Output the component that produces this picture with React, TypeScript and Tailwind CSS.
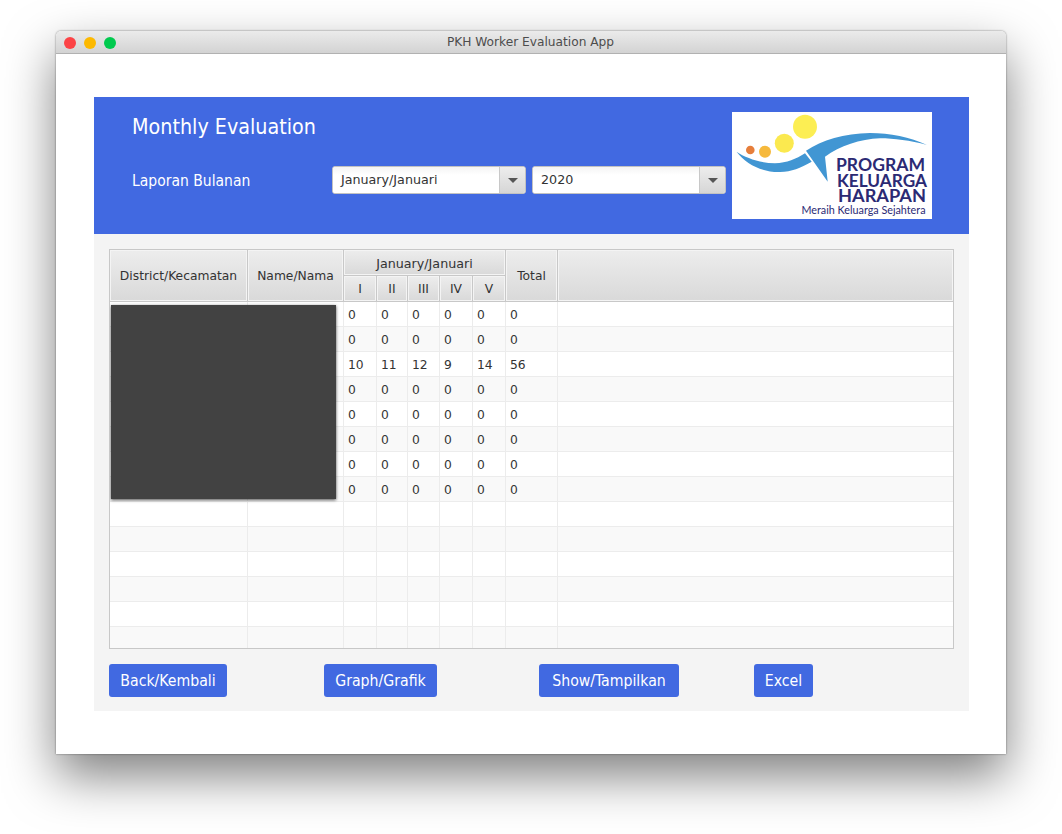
import { ReactNode } from 'react';

const font = "[font-family:'DejaVu_Sans',sans-serif]";

const rows = [
  [0, 0, 0, 0, 0, 0],
  [0, 0, 0, 0, 0, 0],
  [10, 11, 12, 9, 14, 56],
  [0, 0, 0, 0, 0, 0],
  [0, 0, 0, 0, 0, 0],
  [0, 0, 0, 0, 0, 0],
  [0, 0, 0, 0, 0, 0],
  [0, 0, 0, 0, 0, 0],
  [],
  [],
  [],
  [],
  [],
  [],
];

// column widths, each including its right hand line
const widths = ['w-[138px]', 'w-[96px]', 'w-[33px]', 'w-[31px]', 'w-[32px]', 'w-[33px]', 'w-[33px]', 'w-[52px]'];

const headCell =
  'flex items-center justify-center border-r border-b border-[#c8c8c8] bg-gradient-to-b from-[#ededed] to-[#d9d9d9] pt-[2px] text-[#333] shadow-[inset_0_0_0_1px_#f4f4f4]';

function Select({ value }: { value: string }) {
  return (
    <div className="flex h-[28px] w-[194px] overflow-hidden rounded-[3px] border border-[#c2c2c2] bg-white">
      <div className="flex flex-1 items-center bg-gradient-to-b from-[#f4f4f4] to-white to-30% pl-[8px] text-[12.7px] text-[#333]">
        {value}
      </div>
      <div className="flex w-[26px] items-center justify-center border-l border-[#c8c8c8] bg-gradient-to-b from-[#ededed] to-[#d6d6d6]">
        <div className="h-0 w-0 border-x-[5px] border-t-[5px] border-x-transparent border-t-[#555]" />
      </div>
    </div>
  );
}

function Button({ className, children }: { className: string; children: ReactNode }) {
  return (
    <button className={`flex h-[33px] items-center justify-center rounded-[3px] bg-[#4169e1] text-[15.7px] text-white font-stretch-condensed ${className}`}>
      {children}
    </button>
  );
}

function Logo() {
  return (
    <svg viewBox="0 0 200 107" className="mt-[15px] ml-[6px] h-[107px] w-[200px] shrink-0 bg-white">
      <circle cx="73" cy="14.7" r="12" fill="#fcee53" />
      <circle cx="52.3" cy="31.3" r="9.5" fill="#fbe94f" />
      <circle cx="33" cy="39.7" r="6" fill="#f6b93c" />
      <circle cx="18.3" cy="38" r="4.3" fill="#e67e3b" />
      <path d="M4.5 39.7 C14 46 28 51 43 51.3 C55 51 64 47 73 41.3 L79.7 49.7 C68 56 60 59.7 48 60 C30 60.5 14 52 4.5 39.7 Z" fill="#4196d3" />
      <path d="M74 38.7 C90 28 112 21.3 138 21 C158 21 178 25 195 33 C178 28.5 162 26.3 148 26.3 C128 27 108 34 93 44.7 L95.7 69.7 Z" fill="#4196d3" />
      <g fill="#2b2a74" fontFamily="'Lato', sans-serif" fontWeight="700">
        <text x="104" y="58.5" fontSize="16.5" textLength="89" lengthAdjust="spacingAndGlyphs">PROGRAM</text>
        <text x="105" y="74.5" fontSize="16.5" textLength="90" lengthAdjust="spacingAndGlyphs">KELUARGA</text>
        <text x="106" y="89.5" fontSize="16.5" textLength="88" lengthAdjust="spacingAndGlyphs">HARAPAN</text>
      </g>
      <text x="69.5" y="101.5" fontSize="11" textLength="124" lengthAdjust="spacingAndGlyphs" fill="#2b2a74" fontFamily="'Lato', sans-serif">
        Meraih Keluarga Sejahtera
      </text>
    </svg>
  );
}

export default function App() {
  return (
    <div className={`h-[834px] w-[1062px] overflow-hidden bg-white pt-[31px] pl-[56px] ${font}`}>
      <div className="h-[723px] w-[950px] rounded-t-[5px] bg-white shadow-[0_0_2px_rgba(0,0,0,0.55),0_22px_50px_rgba(0,0,0,0.5)]">
        {/* title bar */}
        <div className="relative flex h-[23px] items-center justify-center rounded-t-[5px] border-b border-[#b1b1b1] bg-gradient-to-b from-[#ebebeb] to-[#d3d3d3] pr-[1px] text-[12.2px] text-[#4d4d4d]">
          <div className="absolute top-[6px] left-[8px] flex gap-[8px]">
            <div className="h-[12px] w-[12px] rounded-full bg-[#fc4346]" />
            <div className="h-[12px] w-[12px] rounded-full bg-[#fdb900]" />
            <div className="h-[12px] w-[12px] rounded-full bg-[#00ca4e]" />
          </div>
          PKH Worker Evaluation App
        </div>

        <div className="mt-[43px] ml-[38px] w-[875px]">
          {/* blue header */}
          <div className="flex h-[137px] bg-[#4169e1] text-white">
            <div className="w-[632px] pl-[38px]">
              <div className="mt-[15px] text-[21.3px] leading-[30px] font-stretch-condensed">Monthly Evaluation</div>
              <div className="mt-[24px] flex items-center">
                <div className="w-[200px] pt-[3px] text-[15.5px] font-stretch-condensed">Laporan Bulanan</div>
                <div className="flex gap-[6px]">
                  <Select value="January/Januari" />
                  <Select value="2020" />
                </div>
              </div>
            </div>
            <Logo />
          </div>

          {/* table area */}
          <div className="h-[477px] bg-[#f4f4f4] px-[15px] pt-[15px]">
            <div className="relative h-[400px] w-[845px] overflow-hidden border border-[#c8c8c8] bg-white text-[12.3px]">
              {/* header */}
              <div className="flex h-[52px]">
                <div className={`${headCell} ${widths[0]}`}>District/Kecamatan</div>
                <div className={`${headCell} ${widths[1]}`}>Name/Nama</div>
                <div className="flex w-[162px] flex-col">
                  <div className={`${headCell} h-[26px] text-[12.7px]`}>January/Januari</div>
                  <div className="flex h-[26px]">
                    <div className={`${headCell} ${widths[2]}`}>I</div>
                    <div className={`${headCell} ${widths[3]}`}>II</div>
                    <div className={`${headCell} ${widths[4]}`}>III</div>
                    <div className={`${headCell} ${widths[5]}`}>IV</div>
                    <div className={`${headCell} ${widths[6]}`}>V</div>
                  </div>
                </div>
                <div className={`${headCell} ${widths[7]}`}>Total</div>
                <div className={`${headCell} flex-1 border-r-0`} />
              </div>

              {/* rows */}
              {rows.map((row, r) => (
                <div key={r} className={`flex h-[25px] border-b border-[#ececec] text-[#333] ${r % 2 ? 'bg-[#f9f9f9]' : 'bg-white'}`}>
                  <div className={`${widths[0]} border-r border-[#ececec]`} />
                  <div className={`${widths[1]} border-r border-[#ececec]`} />
                  {[0, 1, 2, 3, 4, 5].map((c) => (
                    <div key={c} className={`${widths[c + 2]} flex items-center border-r border-[#ececec] pt-[2px] pl-[4px]`}>
                      {row[c]}
                    </div>
                  ))}
                </div>
              ))}

              {/* blacked out names */}
              <div className="absolute top-[55px] left-[1px] h-[194px] w-[225px] bg-[#424242] shadow-[0_1px_3px_rgba(0,0,0,0.7)]" />
            </div>

            {/* buttons */}
            <div className="mt-[15px] flex">
              <Button className="w-[118px]">Back/Kembali</Button>
              <Button className="ml-[97px] w-[113px]">Graph/Grafik</Button>
              <Button className="ml-[102px] w-[140px]">Show/Tampilkan</Button>
              <Button className="ml-[75px] w-[59px]">Excel</Button>
            </div>
          </div>
        </div>
      </div>
    </div>
  );
}
